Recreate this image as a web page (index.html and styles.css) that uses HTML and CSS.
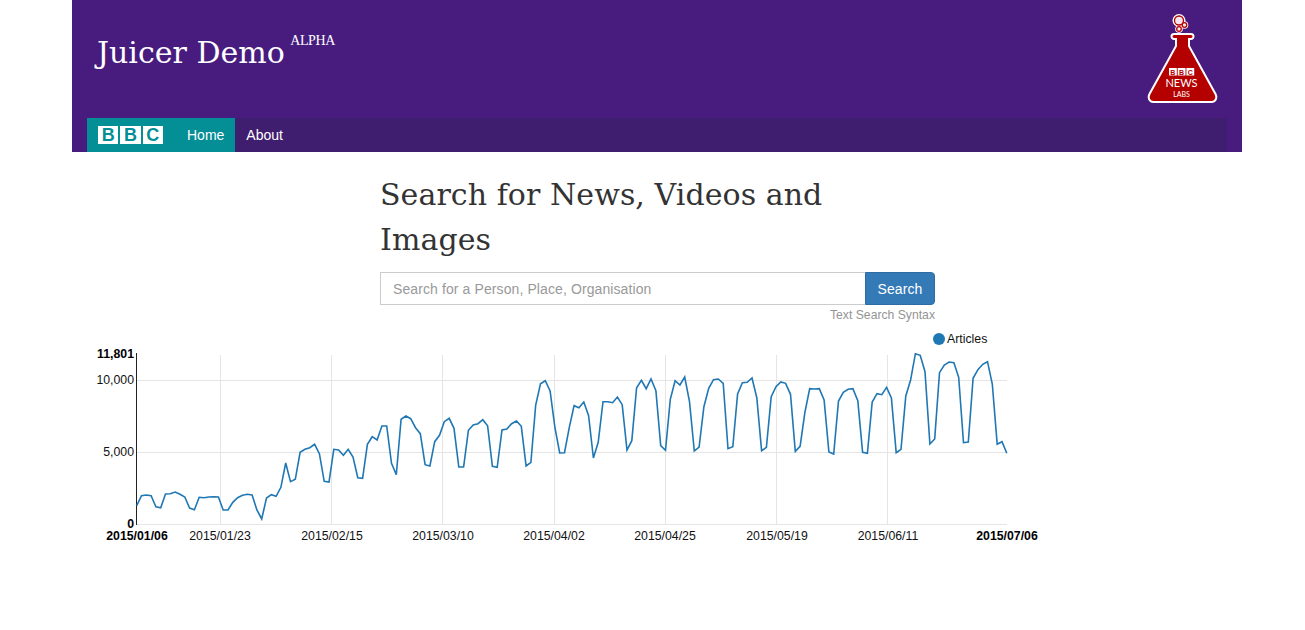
FILE: index.html
```html
<!DOCTYPE html>
<html lang="en">
<head>
<meta charset="utf-8">
<title>Juicer Demo</title>
<link rel="stylesheet" href="styles.css">
</head>
<body>
<div class="page">
  <header class="masthead">
    <div class="brand-row">
      <h1 class="brand">Juicer Demo <sup class="brand-tag">ALPHA</sup></h1>
      <svg class="labs-logo" viewBox="0 0 72 92" width="72" height="92" aria-label="BBC News Labs">
        <path class="flask-outline" d="M28 21h17a2.500 2.500 0 0 1 0 5h-2v7L69.500 81c2 4 0 8-4 8H7.500c-4 0-6-4-4-8L30 33v-7h-2a2.500 2.500 0 0 1 0-5z"/>
        <circle class="bubble-halo" cx="33" cy="7.500" r="6.500"/>
        <circle class="bubble-halo" cx="38.500" cy="12" r="3.800"/>
        <circle class="bubble-halo" cx="33" cy="16" r="3.800"/>
        <circle class="bubble" cx="33" cy="7.500" r="4.500"/>
        <circle class="bubble" cx="38.500" cy="12" r="2.300"/>
        <circle class="bubble" cx="33" cy="16" r="2.300"/>
        <g class="flask-bbc">
          <rect x="23" y="55" width="7.800" height="7.500"/><rect x="31.700" y="55" width="7.800" height="7.500"/><rect x="40.400" y="55" width="7.800" height="7.500"/>
        </g>
        <text class="flask-b" x="26.900" y="61.500">B</text>
        <text class="flask-b" x="35.600" y="61.500">B</text>
        <text class="flask-b" x="44.300" y="61.500">C</text>
        <text class="flask-news" x="35.500" y="74">NEWS</text>
        <text class="flask-labs" x="35.500" y="83.500">LABS</text>
      </svg>
    </div>
    <nav class="navbar">
      <a class="bbc-block">
        <span class="bbc-letter">B</span><span class="bbc-letter">B</span><span class="bbc-letter">C</span>
      </a>
      <a class="nav-link nav-active">Home</a>
      <a class="nav-link">About</a>
    </nav>
  </header>
  <main class="search-area">
    <h2 class="search-title">Search for News, Videos and Images</h2>
    <form class="search-form">
      <input class="search-input" type="text" placeholder="Search for a Person, Place, Organisation">
      <button class="search-button" type="button">Search</button>
    </form>
    <a class="syntax-link">Text Search Syntax</a>
  </main>
  <svg id="chart" class="chart" viewBox="0 0 1170 210" width="1170" height="210">
    <g class="grid">
      <line x1="148.500" x2="148.500" y1="23" y2="192"/>
      <line x1="259.500" x2="259.500" y1="23" y2="192"/>
      <line x1="370.500" x2="370.500" y1="23" y2="192"/>
      <line x1="482.500" x2="482.500" y1="23" y2="192"/>
      <line x1="593.500" x2="593.500" y1="23" y2="192"/>
      <line x1="704.500" x2="704.500" y1="23" y2="192"/>
      <line x1="815.500" x2="815.500" y1="23" y2="192"/>
      <line x1="64" x2="935" y1="48.500" y2="48.500"/>
      <line x1="64" x2="935" y1="120.500" y2="120.500"/>
      <line x1="64" x2="935" y1="192.500" y2="192.500"/>
    </g>
    <line class="axis" x1="64.500" x2="64.500" y1="21" y2="193"/>
    <polyline id="series" class="series" points=""/>
    <circle class="legend-dot" cx="867" cy="7" r="6"/>
    <text class="label" x="875" y="11">Articles</text>
    <text class="label end bold" x="62" y="26">11,801</text>
    <text class="label end" x="62" y="52">10,000</text>
    <text class="label end" x="62" y="124">5,000</text>
    <text class="label end bold" x="62" y="196">0</text>
    <text class="label mid bold" x="65" y="208">2015/01/06</text>
    <text class="label mid" x="148" y="208">2015/01/23</text>
    <text class="label mid" x="260" y="208">2015/02/15</text>
    <text class="label mid" x="371" y="208">2015/03/10</text>
    <text class="label mid" x="482" y="208">2015/04/02</text>
    <text class="label mid" x="593" y="208">2015/04/25</text>
    <text class="label mid" x="705" y="208">2015/05/19</text>
    <text class="label mid" x="816" y="208">2015/06/11</text>
    <text class="label mid bold" x="935" y="208">2015/07/06</text>
  </svg>
</div>
<script src="chart.js"></script>
</body>
</html>
```
FILE: styles.css
```css
* { box-sizing: border-box; }
html, body { margin: 0; padding: 0; background: #fff; }
body { font-family: "Liberation Sans", Arial, sans-serif; font-size: 14px; color: #333; }
.page { width: 1170px; margin-left: 72px; }
.masthead { background: #481c7f; height: 152px; padding: 0 15px; display: flex; flex-direction: column; justify-content: space-between; }
.brand-row { display: flex; justify-content: space-between; align-items: flex-start; height: 118px; padding-left: 8px; padding-top: 13px; padding-right: 9px; }
.brand { margin: 20px 0 0 2px; font-family: "DejaVu Serif", serif; font-weight: 400; font-size: 30px; line-height: 40px; color: #fff; }
.brand-tag { font-family: "Liberation Serif", serif; font-size: 14px; letter-spacing: -0.400px; position: relative; top: -18px; vertical-align: baseline; margin-left: -4px; }
.labs-logo { display: block; }
.flask-outline { fill: #b50000; stroke: #fff; stroke-width: 2; }
.bubble-halo { fill: #fff; }
.bubble { fill: #f3e6ee; stroke: #b50000; stroke-width: 1.300; }
.flask-bbc rect { fill: #fff; }
.flask-b { font: 700 7px "Liberation Sans", sans-serif; fill: #b50000; text-anchor: middle; }
.flask-news { font: 400 11px Lato, sans-serif; fill: #fff; text-anchor: middle; }
.flask-labs { font: 400 7px Lato, sans-serif; fill: #fff; text-anchor: middle; }
.navbar { height: 34px; background: #3f1d6f; display: flex; align-items: stretch; }
.bbc-block { background: #048e96; padding-left: 11px; width: 89px; display: flex; align-items: center; gap: 2px; }
.bbc-letter { width: 20.300px; height: 18px; background: #fff; color: #048e96; font-weight: 700; font-size: 18px; line-height: 18px; text-align: center; }
.nav-link { color: #fff; font-size: 14px; line-height: 34px; padding: 0 11px; }
.nav-active { background: #048e96; }
.search-area { width: 555px; margin-left: 308px; padding-top: 20px; }
.search-title { margin: 0 0 10px; width: 460px; font-family: "DejaVu Serif", serif; font-weight: 400; font-size: 30px; letter-spacing: 0.070px; line-height: 45px; color: #333; }
.search-form { display: flex; height: 33px; }
.search-input { flex: 1; min-width: 0; border: 1px solid #ccc; border-right: 0; padding: 0 12px; font: 14px "Liberation Sans", sans-serif; letter-spacing: 0.100px; color: #555; background: #fff; outline: none; }
.search-input::placeholder { color: #999; opacity: 1; }
.search-button { width: 70px; border: 1px solid #2e6da4; background: #337ab7; color: #fff; font: 14px "Liberation Sans", sans-serif; letter-spacing: 0.100px; border-radius: 0 4px 4px 0; padding: 0; }
.syntax-link { display: block; padding-top: 1px; text-align: right; font-size: 12.200px; line-height: 18px; color: #949494; }
.chart { display: block; margin-top: 8px; }
.grid line { stroke: #e5e5e5; stroke-width: 1; }
.axis { stroke: #222; stroke-width: 1; }
.series { fill: none; stroke: #1f77b4; stroke-width: 1.600; }
.legend-dot { fill: #1f77b4; }
.label { font: 12.300px "Liberation Sans", sans-serif; fill: #111; }
.end { text-anchor: end; }
.mid { text-anchor: middle; }
.bold { font-weight: 700; fill: #000; }
```
FILE: chart.js
```js
// Daily article counts, read as pixel heights of the plotted line.
var early = [497,467,465,467,500,503,462,461,456,463,471,504,509,472,473,471,470,471,510,510,487,473,466,463,465,510,537,474,464,469,442,369,425,418,337,328,323,313,341,424,426,328,330,346,328,351,413,415,313,290,300,258,258,370,404,238,228,236,263,281,374,378,305,286,245,235,265,381,381,271,255,251,239,257,379,382,270,267,251,243,259,378,367,195,131,122,153,262,339,338,262,197,203,186,227,354,307,185,185,188,171,194,330,302,143,121,146,117,152,317,331,178,122,135,111,185,333,321,200,145,119,117];
var late = [160,356,350,192,158,157,144,203,362,352,200,170,156,160,193,364,349,247,176,177,176,210,366,372,213,187,178,176,212,367,370,216,191,194,172,204,368,358,198,150,71,76,125,342,327,128,105,96,98,142,338,336,145,119,103,95,162,343,335,370];
var chartTop = 332;
var ys = early.map(function (v) { return 340 + v / 3 - chartTop; })
  .concat(late.map(function (v) { return 330 + v / 3 - chartTop; }));
var pts = ys.map(function (y, i) {
  return (64.7 + i * 4.807).toFixed(1) + ',' + y.toFixed(1);
});
document.getElementById('series').setAttribute('points', pts.join(' '));
```
